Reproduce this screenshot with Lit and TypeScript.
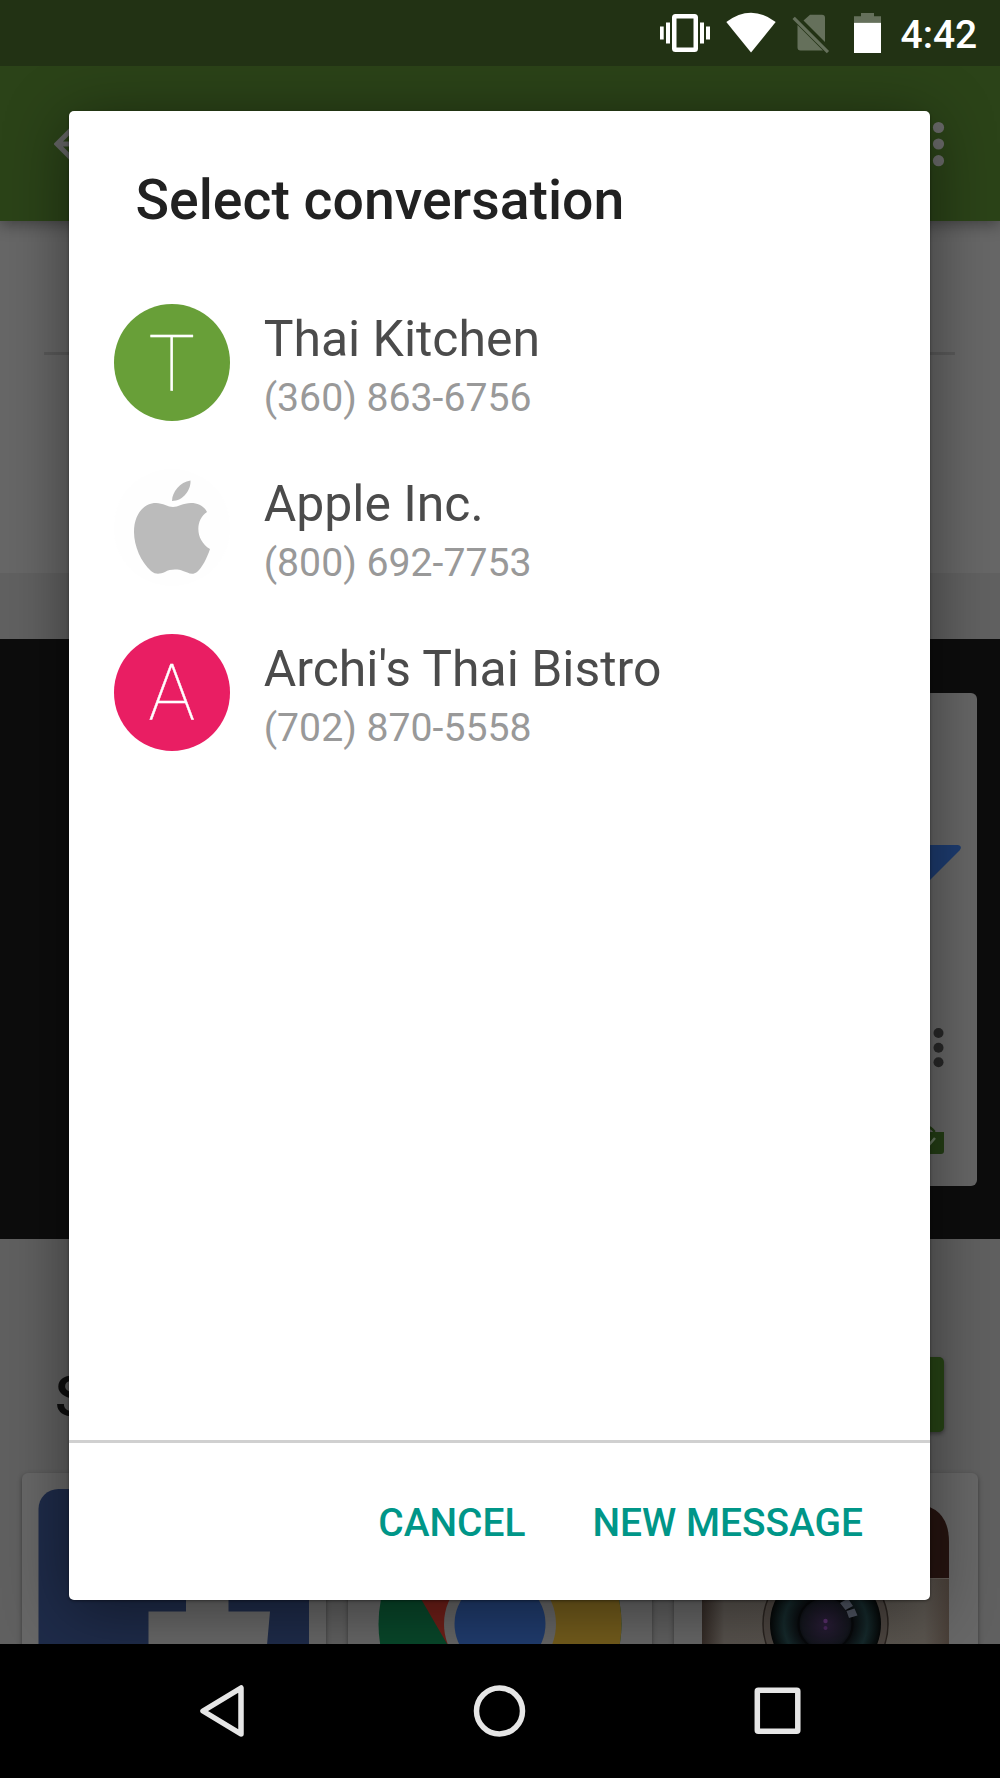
import { LitElement, html, css } from "lit";
import { customElement } from "lit/decorators.js";

interface Contact {
  name: string;
  phone: string;
  initial?: string;
  tone: string;
}

const contacts: Contact[] = [
  { name: "Thai Kitchen", phone: "(360) 863-6756", initial: "T", tone: "green" },
  { name: "Apple Inc.", phone: "(800) 692-7753", tone: "plain" },
  { name: "Archi's Thai Bistro", phone: "(702) 870-5558", initial: "A", tone: "pink" },
];

@customElement("status-bar")
class StatusBar extends LitElement {
  static styles = css`
    :host { display: flex; height: 66px; background: #223214; justify-content: flex-end; color: #fff; }
    .icons { flex: none; width: 260px; height: 66px; }
    .time { width: 76px; margin: 12px 23.500px 0 .5px; font: 500 39px/46px Roboto, sans-serif; white-space: nowrap; }
  `;
  render() {
    return html`
      <svg class="icons" viewBox="640 0 260 66">
        <g fill="#fff">
          <path fill-rule="evenodd" d="M675.500 14h19a3.500 3.500 0 0 1 3.500 3.500v31a3.500 3.500 0 0 1-3.500 3.500h-19a3.500 3.500 0 0 1-3.500-3.500v-31a3.500 3.500 0 0 1 3.500-3.500zM676.500 18.500v29h17v-29z"/>
          <path d="M660 26.500h3.700v13H660zM666 22.500h4v21h-4zM700 22.500h4v21h-4zM706 26.500h4v13h-4z"/>
          <path d="M726.300 22Q751 3.500 775.700 22L751 52.500z"/>
          <path d="M854 22.500h27V53h-27z"/>
        </g>
        <g fill="#65705b">
          <path d="M810 14.700h12a3 3 0 0 1 3 3V42L803.500 20.500zM797.500 25L823 50.500H800.500a3 3 0 0 1-3-3z"/>
          <path d="M794.800 16.700l34.300 34.300-2.300 2.300-34.300-34.300z"/>
          <path d="M861 13h13v3.300h7V22.500h-27V16.300h7z"/>
        </g>
      </svg>
      <div class="time">4:42</div>
    `;
  }
}

@customElement("store-page")
class StorePage extends LitElement {
  static styles = css`
    :host { display: flex; flex-direction: column; height: 1578px; font-family: Roboto, sans-serif; isolation: isolate; }
    .app-bar { flex: none; height: 155px; background: #2b4318; display: flex; justify-content: space-between; box-shadow: 0 4px 14px rgba(0,0,0,.35); z-index: 1; }
    .back { margin: 52.500px 0 0 54px; width: 50px; height: 50px; }
    .more { margin: 55px 55px 0 0; width: 13px; height: 46px; }
    .summary { flex: none; height: 352px; background: #676767; padding: 0 45px 0 44px; }
    .rule { margin-top: 131px; height: 3px; background: #5a5a5a; }
    .band { flex: none; height: 66px; background: #616161; }
    .feature { flex: none; height: 600px; background: #0d0d0d; display: flex; justify-content: flex-end; align-items: flex-start; }
    .card { margin: 54px 23px 0 0; width: 160px; height: 492.500px; border-radius: 6px; background: #666; }
    .card svg { display: block; }
    .similar { flex: 1; background: #606060; overflow: hidden; }
    .heading { display: flex; justify-content: space-between; padding: 118px 56px 0 55px; height: 116px; }
    .title { margin-top: 2px; font-weight: 500; font-size: 56px; line-height: 76px; color: #0e0e0e; }
    .button { width: 120px; height: 75px; border-radius: 5px; background: #274415; box-shadow: 0 2px 4px rgba(0,0,0,.4); }
    .apps { display: flex; gap: 22px; padding: 0 22px; }
    .app { flex: 1; height: 180px; border-radius: 6px 6px 0 0; background: #676767; box-shadow: 0 2px 5px rgba(0,0,0,.4); }
    .app svg { display: block; width: 100%; height: 180px; }
  `;
  render() {
    return html`
      <div class="app-bar">
        <svg class="back" viewBox="0 0 50 50"><path d="M26 2L3 25l23 23M5 25h43" fill="none" stroke="#656565" stroke-width="5"/></svg>
        <svg class="more" viewBox="0 0 13 46" fill="#6b6b6b">
          <circle cx="6.500" cy="6.500" r="5.600"/><circle cx="6.500" cy="23" r="5.600"/><circle cx="6.500" cy="39.700" r="5.600"/>
        </svg>
      </div>
      <div class="summary"><div class="rule"></div></div>
      <div class="band"></div>
      <div class="feature">
        <div class="card">
          <svg width="160" height="492" viewBox="817 693 160 492">
            <path d="M880 845h78q5 1 1.500 5.500L900 910z" fill="#1d3c70"/>
            <g fill="#282828"><circle cx="938.500" cy="1033" r="5"/><circle cx="938.500" cy="1047.700" r="5"/><circle cx="938.500" cy="1062.300" r="5"/></g>
            <path d="M908 1132h36v19q0 3-3 3h-33z" fill="#243e15"/>
            <path d="M922 1132v-1q5-8 12 0v1" fill="none" stroke="#243e15" stroke-width="2.500"/>
            <path d="M924 1143l4 3 7-8" fill="none" stroke="#687862" stroke-width="2.500"/>
          </svg>
        </div>
      </div>
      <div class="similar">
        <div class="heading"><span class="title">Similar</span><div class="button"></div></div>
        <div class="apps">
          <div class="app">${this.facebook()}</div>
          <div class="app">${this.chrome()}</div>
          <div class="app">${this.camera()}</div>
        </div>
      </div>
    `;
  }

  facebook() {
    return html`<svg viewBox="22 1473 304 180" preserveAspectRatio="none">
      <rect x="38.500" y="1489" width="270.500" height="270" rx="20" fill="#1e2b49"/>
      <path d="M186 1590h42.500v21.500H270l-4 45H148.500v-45H186z" fill="#686868"/>
    </svg>`;
  }

  chrome() {
    return html`<svg viewBox="348 1473 304 180" preserveAspectRatio="none">
      <circle cx="500" cy="1624" r="121.500" fill="#08472a"/>
      <path d="M398.400 1560L475 1692l25-40V1502z" fill="#701f18"/>
      <path d="M500 1570h108.800A121.500 121.500 0 0 1 500 1745.500z" fill="#735c1c"/>
      <circle cx="500" cy="1624" r="56" fill="#666"/><circle cx="500" cy="1624" r="45.500" fill="#203c6e"/>
    </svg>`;
  }

  camera() {
    return html`<svg viewBox="674 1473 304 180" preserveAspectRatio="none">
      <defs>
        <linearGradient id="body" x1="0" x2="1"><stop offset="0" stop-color="#332a25"/><stop offset=".09" stop-color="#57524d"/><stop offset=".9" stop-color="#5a554f"/><stop offset="1" stop-color="#493f38"/></linearGradient>
        <radialGradient id="lens"><stop offset="0" stop-color="#2a1d38"/><stop offset=".42" stop-color="#14161e"/><stop offset=".5" stop-color="#0a0d10"/><stop offset=".75" stop-color="#162a2c"/><stop offset="1" stop-color="#050707"/></radialGradient>
      </defs>
      <path d="M702 1578v-36q0-38 38-38h171q38 0 38 38v36z" fill="#261410"/>
      <path d="M702 1578h247v100H702z" fill="url(#body)"/>
      <path d="M702 1578.500h247" stroke="#625c56"/>
      <circle cx="825.500" cy="1624" r="62.500" fill="#4c4540" stroke="#29231f" stroke-width="1.500"/>
      <circle cx="825.500" cy="1624" r="55.500" fill="url(#lens)"/>
      <circle cx="825.500" cy="1624" r="27" fill="none" stroke="#07090b" stroke-width="2"/>
      <path d="M840 1603l8-4.500 5 7.500-7.500 4zM846.500 1611l8-2.500 3 7-8.500 2.500z" fill="#4f5562"/>
      <circle cx="825.500" cy="1621" r="2.200" fill="#59306c"/><circle cx="825.500" cy="1628" r="2" fill="#4a275c"/>
    </svg>`;
  }
}

@customElement("conversation-dialog")
class ConversationDialog extends LitElement {
  static styles = css`
    :host { display: flex; flex-direction: column; width: 861px; height: 1489px; border-radius: 5px; background: #fff; box-shadow: 0 10px 64px rgba(0,0,0,.45), 0 1px 3px rgba(0,0,0,.4); font-family: Roboto, sans-serif; }
    .title { margin: 57px 0 0 66.500px; font-size: 55.400px; line-height: 66px; font-weight: 500; color: #212121; white-space: nowrap; }
    .list { flex: 1; display: flex; flex-direction: column; padding: 70px 0 0 44.500px; gap: 48px; }
    .row { display: flex; height: 117px; }
    .avatar { flex: none; width: 116.500px; height: 117px; border-radius: 50%; text-align: center; color: #fff; font-size: 77.800px; font-weight: 100; line-height: 120px; -webkit-text-stroke: .4px #fff; }
    .green { background: #689f38; }
    .pink { background: #e91e63; }
    .plain { background: #fefefe; }
    .plain svg { display: block; }
    .text { margin-left: 33.700px; white-space: nowrap; }
    .name { margin-top: 6px; font-size: 49.900px; line-height: 58px; color: #4b4b4b; }
    .phone { margin-top: 7.500px; font-size: 39.200px; line-height: 46px; color: #999; }
    .actions { height: 100px; border-top: 3px solid #d0d0d0; display: flex; justify-content: flex-end; gap: 67px; padding: 56.500px 67px 0 0; }
    .action { border: 0; padding: 0; background: none; height: 46px; font: 500 38.900px/46px Roboto, sans-serif; color: #009688; white-space: nowrap; }
  `;
  render() {
    return html`
      <div class="title">Select conversation</div>
      <div class="list">
        ${contacts.map((c) => html`
          <div class="row">
            <div class="avatar ${c.tone}">${c.initial ?? html`
              <svg width="117" height="117" viewBox="114 469 117 117" fill="#bbb">
                <path d="M172 501c0-9 8-19 18.500-20.500C191 490 183 501 172 501z"/>
                <path d="M173 507c5 0 10-4 18-4 7 0 13 3 16 9-12 8-12 28 3 37-3 9-8 19-13 23-5 4-10 0-14-1-5-2-13-2-18 1-5 2-9 3-14-1-10-9-17-25-17-39 0-18 10-29 22-29 7 0 12 4 17 4z"/>
              </svg>`}</div>
            <div class="text"><div class="name">${c.name}</div><div class="phone">${c.phone}</div></div>
          </div>`)}
      </div>
      <div class="actions"><button class="action">CANCEL</button><button class="action">NEW MESSAGE</button></div>
    `;
  }
}

@customElement("nav-bar")
class NavBar extends LitElement {
  static styles = css`
    :host { display: flex; height: 134px; background: #000; justify-content: center; }
    svg { display: block; }
  `;
  render() {
    return html`<svg width="1000" height="134" viewBox="0 1644 1000 134" fill="none" stroke="#e6e6e6" stroke-width="5.500" stroke-linejoin="round">
      <path d="M241 1688v46L203 1711z"/>
      <circle cx="499.500" cy="1711" r="23"/>
      <rect x="757.300" y="1690.300" width="40.500" height="41" rx="1"/>
    </svg>`;
  }
}

@customElement("app-root")
class AppRoot extends LitElement {
  static styles = css`
    :host { display: block; position: relative; width: 1000px; height: 1778px; overflow: hidden; }
    .stage { position: relative; height: 1578px; overflow: hidden; }
    .dialog { position: absolute; left: 69px; top: 44.500px; z-index: 2; }
  `;
  render() {
    return html`
      <status-bar></status-bar>
      <div class="stage"><store-page></store-page><conversation-dialog class="dialog"></conversation-dialog></div>
      <nav-bar></nav-bar>
    `;
  }
}
